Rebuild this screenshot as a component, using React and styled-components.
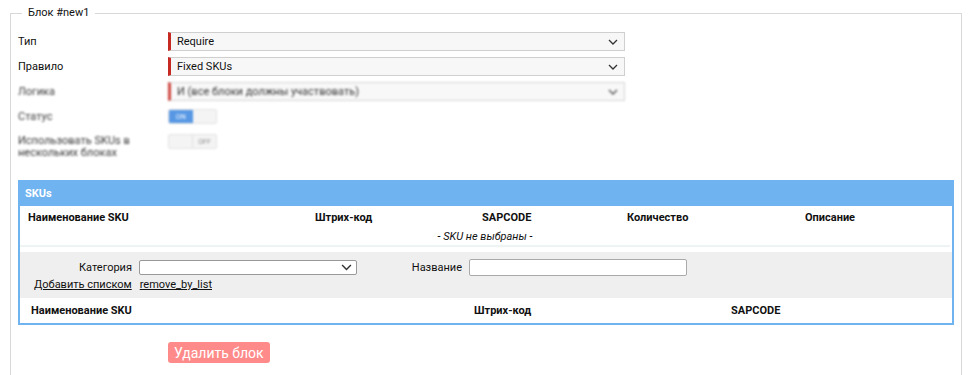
import React from "react";
import styled, { createGlobalStyle } from "styled-components";

const GlobalStyle = createGlobalStyle`
  body {
    margin: 0;
    background: #fff;
    font-family: Roboto, "Noto Sans", sans-serif;
    font-size: 11px;
    color: #111;
  }
`;

const Page = styled.div`
  padding: 6px 10px 0 10px;
  width: 952px;
`;

const Block = styled.fieldset`
  margin: 0;
  padding: 12px 7px 10px 7px;
  border: 1px solid #d8d8d8;
  border-bottom: none;
  min-width: 0;
`;

const Legend = styled.legend`
  margin-left: 4px;
  padding: 0 6px;
  font-size: 11px;
  line-height: 14px;
`;

const FormGrid = styled.div`
  display: grid;
  grid-template-columns: 150px 457px;
  row-gap: 6px;
  align-items: center;
`;

const Blurred = styled.div`
  display: contents;
  & > * {
    filter: blur(1.2px);
    opacity: 0.85;
  }
`;

const Label = styled.div`
  line-height: 12px;
  align-self: ${(p) => (p.$top ? "start" : "center")};
  padding-top: ${(p) => (p.$top ? "3px" : "0")};
`;

const SelectBox = styled.div`
  height: 17px;
  display: flex;
  align-items: center;
  justify-content: space-between;
  background: #f7f7f7;
  border: 1px solid #cfcfcf;
  border-left: 3px solid #c62a22;
  padding: 0 6px 0 6px;
`;

const Chevron = ({ size = 10 }) => (
  <svg width={size} height={size * 0.6} viewBox="0 0 10 6" fill="none">
    <path d="M1 1l4 4 4-4" stroke="#333" strokeWidth="1.3" />
  </svg>
);

const Toggle = styled.div`
  width: 47px;
  height: 13px;
  margin: 2px 0;
  display: flex;
  align-self: ${(p) => (p.$top ? "start" : "center")};
  border: 1px solid #ddd;
  border-radius: 2px;
  overflow: hidden;
  background: #f3f3f3;
`;

const ToggleHalf = styled.div`
  flex: 1;
  display: flex;
  align-items: center;
  justify-content: center;
  font-size: 7px;
  color: ${(p) => (p.$on ? "#fff" : "#777")};
  background: ${(p) => (p.$on ? "#3a86e0" : "transparent")};
  border-left: ${(p) => (p.$sep ? "1px solid #ddd" : "none")};
`;

const Panel = styled.div`
  margin-top: 21px;
  border: 2px solid #6fb3f0;
  border-top: none;
`;

const PanelHead = styled.div`
  background: #6fb3f0;
  color: #fff;
  font-weight: bold;
  height: 26px;
  display: flex;
  align-items: center;
  padding-left: 5px;
`;

const HeadRow = styled.div`
  display: grid;
  grid-template-columns: ${(p) => p.$cols};
  padding: ${(p) => p.$pad};
  font-weight: bold;
  height: ${(p) => p.$h}px;
  align-items: center;
`;

const Empty = styled.div`
  text-align: center;
  font-style: italic;
  line-height: 14px;
  padding: 2px 0 1px;
  border-bottom: 2px solid #eef3f3;
  margin-right: 2px;
`;

const Filters = styled.div`
  margin-top: 5px;
  background: #efefef;
  padding: 7px 0 6px;
`;

const FilterRow = styled.div`
  display: flex;
  align-items: center;
  height: 17px;
`;

const FilterLabel = styled.div`
  width: ${(p) => p.$w}px;
  text-align: right;
  padding-right: 7px;
  box-sizing: border-box;
`;

const SmallSelect = styled.div`
  width: 218px;
  height: 15px;
  box-sizing: border-box;
  background: #fff;
  border: 1px solid #999;
  border-radius: 2px;
  display: flex;
  align-items: center;
  justify-content: flex-end;
  padding-right: 4px;
`;

const TextInput = styled.div`
  width: 218px;
  height: 17px;
  box-sizing: border-box;
  background: #fff;
  border: 1px solid #aaa;
  border-radius: 2px;
`;

const Links = styled.div`
  display: flex;
  gap: 8px;
  padding-left: 14px;
  margin-top: 2px;
  line-height: 14px;
`;

const LinkText = styled.span`
  text-decoration: underline;
  color: #111;
`;

const Actions = styled.div`
  padding: 17px 0 8px 150px;
`;

const DangerButton = styled.button`
  background: #ff8a8a;
  color: #fff;
  border: none;
  border-radius: 3px;
  height: 21px;
  padding: 0 6px;
  font-family: Roboto, "Noto Sans", sans-serif;
  font-size: 14px;
`;

export default function App() {
  return (
    <Page>
      <GlobalStyle />
      <Block>
        <Legend>Блок #new1</Legend>
        <FormGrid>
          <Label>Тип</Label>
          <SelectBox>
            Require <Chevron />
          </SelectBox>
          <Label>Правило</Label>
          <SelectBox>
            Fixed SKUs <Chevron />
          </SelectBox>
          <Blurred>
            <Label>Логика</Label>
            <SelectBox>
              И (все блоки должны участвовать) <Chevron />
            </SelectBox>
            <Label>Статус</Label>
            <Toggle>
              <ToggleHalf $on>ON</ToggleHalf>
              <ToggleHalf />
            </Toggle>
            <Label $top>
              Использовать SKUs в
              <br />
              нескольких блоках
            </Label>
            <Toggle $top>
              <ToggleHalf />
              <ToggleHalf $sep>OFF</ToggleHalf>
            </Toggle>
          </Blurred>
        </FormGrid>

        <Panel>
          <PanelHead>SKUs</PanelHead>
          <HeadRow $cols="287px 167px 145px 178px 1fr" $pad="0 0 0 8px" $h={22}>
            <div>Наименование SKU</div>
            <div>Штрих-код</div>
            <div>SAPCODE</div>
            <div>Количество</div>
            <div>Описание</div>
          </HeadRow>
          <Empty>- SKU не выбраны -</Empty>
          <Filters>
            <FilterRow>
              <FilterLabel $w={119}>Категория</FilterLabel>
              <SmallSelect>
                <Chevron size={11} />
              </SmallSelect>
              <FilterLabel $w={112}>Название</FilterLabel>
              <TextInput />
            </FilterRow>
            <Links>
              <LinkText>Добавить списком</LinkText>
              <LinkText>remove_by_list</LinkText>
            </Links>
          </Filters>
          <HeadRow $cols="443px 257px 1fr" $pad="0 0 0 11px" $h={25}>
            <div>Наименование SKU</div>
            <div>Штрих-код</div>
            <div>SAPCODE</div>
          </HeadRow>
        </Panel>

        <Actions>
          <DangerButton>Удалить блок</DangerButton>
        </Actions>
      </Block>
    </Page>
  );
}
